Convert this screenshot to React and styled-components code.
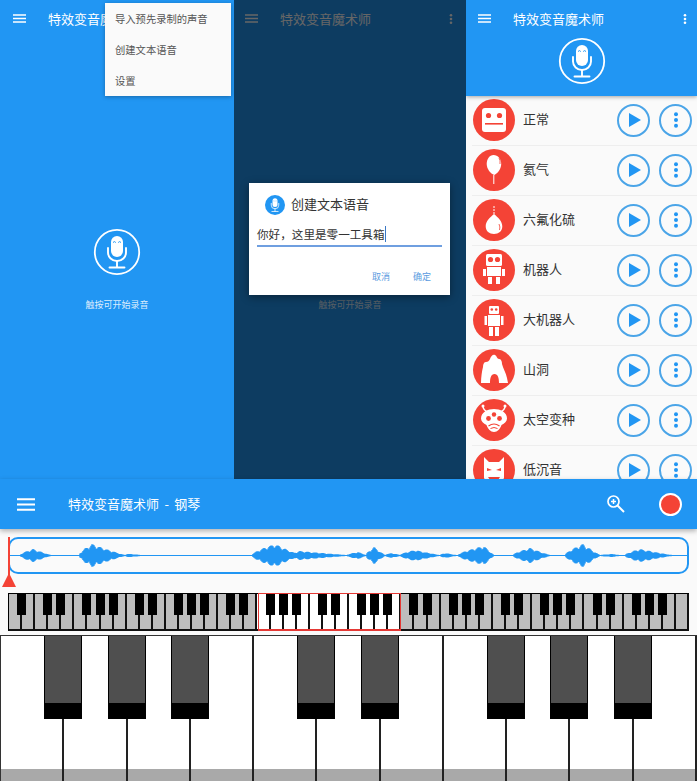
import React from 'react';
import styled, { createGlobalStyle } from 'styled-components';

const BLUE = '#2196f3';
const RED = '#f44336';

const GlobalStyle = createGlobalStyle`
	html, body {
		margin: 0;
		padding: 0;
		background: #fafafa;
	}
	* {
		box-sizing: border-box;
	}
`;

const Page = styled.div`
	width: 697px;
	height: 781px;
	overflow: hidden;
	font-family: 'Noto Sans CJK SC', 'Noto Sans', sans-serif;
	background: #fafafa;
`;

const TopRow = styled.div`
	display: grid;
	grid-template-columns: 234px 232px 231px;
	height: 479px;
	overflow: hidden;
`;

const Phone = styled.div`
	position: relative;
	display: flex;
	flex-direction: column;
	height: 479px;
	overflow: hidden;
	background: ${BLUE};
`;

const Scrim = styled.div`
	position: absolute;
	inset: 0;
	background: rgba(0, 0, 0, 0.6);
`;

const AppBar = styled.div`
	display: flex;
	align-items: center;
	flex: none;
	height: 37px;
	padding: 0 ${(p) => p.$right}px 0 ${(p) => p.$left}px;
	color: #fff;
`;

const AppTitle = styled.div`
	margin-left: 22px;
	font-size: 13px;
	line-height: 18px;
	white-space: nowrap;
	flex: 1;
`;

const Idle = styled.div`
	display: flex;
	flex-direction: column;
	align-items: center;
	padding-top: 191px;
`;

const IdleHint = styled.div`
	margin-top: 22px;
	font-size: 9px;
	line-height: 14px;
	color: rgba(255, 255, 255, 0.85);
`;

const Menu = styled.div`
	position: absolute;
	top: 3px;
	right: 3px;
	width: 126px;
	background: #fafafa;
	box-shadow: 0 1px 4px rgba(0, 0, 0, 0.3);
`;

const MenuItem = styled.div`
	height: 31px;
	padding-left: 10px;
	font-size: 10.3px;
	line-height: 31px;
	color: #555;
	white-space: nowrap;
`;

const Dialog = styled.div`
	position: absolute;
	top: 183px;
	left: 15px;
	width: 201px;
	height: 112px;
	padding: 11px 8px 0;
	background: #fff;
	box-shadow: 0 2px 8px rgba(0, 0, 0, 0.4);
`;

const DialogHead = styled.div`
	display: flex;
	align-items: center;
	gap: 6px;
	height: 22px;
	padding-left: 8px;
	font-size: 13px;
	line-height: 18px;
	color: #333;
`;

const DialogHeadText = styled.span`
	margin-bottom: 3px;
`;

const DialogBadge = styled.div`
	width: 20px;
	height: 20px;
	border-radius: 50%;
	background: ${BLUE};
`;

const DialogInput = styled.div`
	display: flex;
	align-items: center;
	height: 24px;
	margin-top: 7px;
	border-bottom: 2px solid #6f9fe0;
	font-size: 11.6px;
	color: #333;
	white-space: nowrap;
`;

const Caret = styled.span`
	width: 1px;
	height: 16px;
	background: #3b78c4;
`;

const DialogActions = styled.div`
	display: flex;
	justify-content: flex-end;
	gap: 23px;
	margin-top: 23px;
	padding-right: 11px;
	font-size: 9px;
	line-height: 14px;
	color: #5b9be0;
`;

const HeadPanel = styled.div`
	position: relative;
	z-index: 1;
	display: flex;
	flex-direction: column;
	flex: none;
	height: 96px;
	background: ${BLUE};
	box-shadow: 0 1px 4px rgba(0, 0, 0, 0.35);
`;

const HeadMic = styled.div`
	display: flex;
	justify-content: center;
`;

const VoiceList = styled.div`
	flex: none;
	background: #fafafa;
`;

const VoiceRow = styled.div`
	display: flex;
	align-items: center;
	height: 50px;
	margin-left: 6px;
	padding: 0 5px 1px 1px;
	border-bottom: 1px solid #eee;
	gap: 9px;
`;

const VoiceName = styled.div`
	flex: 1;
	margin: 0 0 2px -1px;
	font-size: 13px;
	line-height: 18px;
	color: #333;
	white-space: nowrap;
`;

const RoundButton = styled.div`
	display: flex;
	align-items: center;
	justify-content: center;
	width: 33px;
	height: 33px;
	border: 2px solid #4ba5e8;
	border-radius: 50%;
`;

const PlayGlyph = styled.svg`
	margin-left: 3px;
`;

const PianoBar = styled.div`
	position: relative;
	z-index: 1;
	display: flex;
	align-items: center;
	height: 50px;
	padding: 0 15px 0 17px;
	color: #fff;
	background: ${BLUE};
	box-shadow: 0 2px 5px rgba(0, 0, 0, 0.3);
`;

const PianoTitle = styled.div`
	flex: 1;
	margin-left: 33px;
	font-size: 13px;
	line-height: 18px;
	word-spacing: 2.5px;
`;

const RecordButton = styled.div`
	width: 23px;
	height: 23px;
	margin-left: 33px;
	border: 2px solid #fff;
	border-radius: 50%;
	background: ${RED};
`;

const WaveRow = styled.div`
	position: relative;
	height: 37px;
	margin: 8px 8px 0;
	border: 2px solid ${BLUE};
	border-radius: 10px;
`;

const Playhead = styled.div`
	position: absolute;
	top: -2px;
	left: -2px;
	width: 2px;
	height: 38px;
	background: ${RED};
	&::after {
		content: '';
		position: absolute;
		top: 36px;
		left: -6px;
		border-left: 7px solid transparent;
		border-right: 7px solid transparent;
		border-bottom: 14px solid ${RED};
	}
`;

const MiniKeys = styled.div`
	position: relative;
	display: flex;
	height: 38px;
	margin: 19px 8px 0;
	border-top: 1px solid #000;
	border-bottom: 2px solid #111;
	border-left: 1px solid #000;
`;

const MiniWhite = styled.div`
	position: relative;
	flex: 1;
	background: ${(p) => (p.$active ? '#fff' : '#bdbdbd')};
	border-right: 2px solid #111;
`;

const MiniBlack = styled.div`
	position: absolute;
	top: 0;
	right: -6px;
	z-index: 1;
	width: 9px;
	height: 21px;
	background: #000;
`;

const MiniWindow = styled.div`
	position: absolute;
	top: -1px;
	bottom: -2px;
	left: 36.57%;
	width: 21.15%;
	z-index: 2;
	border: 1px solid #e53935;
	border-bottom-width: 2px;
`;

const BigKeys = styled.div`
	display: flex;
	height: 147px;
	margin-top: 4px;
	border-top: 1px solid #333;
	border-left: 1px solid #333;
`;

const BigWhite = styled.div`
	position: relative;
	display: flex;
	flex-direction: column;
	justify-content: flex-end;
	flex: 1;
	background: #fff;
	border-right: 2px solid #222;
	border-bottom: 1px solid #444;
`;

const BigLip = styled.div`
	height: 12px;
	background: #a9a9a9;
`;

const BigBlack = styled.div`
	position: absolute;
	top: 0;
	right: -20px;
	z-index: 1;
	width: 38px;
	height: 83px;
	background: #4f4f4f;
	border: solid #000;
	border-width: 0 1.5px 16px;
`;

const Bars = () => (
	<svg width="13" height="9" viewBox="0 0 13 9">
		<path d="M0 1h13M0 4.500h13M0 8h13" stroke="currentColor" strokeWidth="1.400" fill="none" />
	</svg>
);

const BigBars = () => (
	<svg width="18" height="13" viewBox="0 0 18 13">
		<path d="M0 1.200h18M0 6.500h18M0 11.800h18" stroke="currentColor" strokeWidth="2" fill="none" />
	</svg>
);

const Dots = ({ color = 'currentColor', r = 1.300, gap = 3.800 }) => (
	<svg width="6" height="18" viewBox="0 0 6 18">
		<circle cx="3" cy={9 - gap} r={r} fill={color} />
		<circle cx="3" cy="9" r={r} fill={color} />
		<circle cx="3" cy={9 + gap} r={r} fill={color} />
	</svg>
);

const MicGlyph = ({ bg = BLUE }) => (
	<>
		<rect x="18" y="8" width="12" height="21" rx="6" fill="#fff" />
		<path d="M20 14.500q1.400-1.800 2.800 0M25.200 14.500q1.400-1.800 2.800 0" stroke={bg} strokeWidth="1" fill="none" />
		<path d="M15 20v4.500a9 8.500 0 0 0 18 0V20" stroke="#fff" strokeWidth="1.900" fill="none" strokeLinecap="round" />
		<path d="M24 33v6M16.500 39.500h15" stroke="#fff" strokeWidth="1.900" fill="none" strokeLinecap="round" />
	</>
);

const Mic = ({ size = 48 }) => (
	<svg width={size} height={size} viewBox="0 0 48 48">
		<circle cx="24" cy="24" r="22.200" stroke="#fff" strokeWidth="1.800" fill="none" />
		<MicGlyph />
	</svg>
);

const VOICE_SHAPES = {
	normal: (
		<>
			<rect x="9" y="9" width="24" height="24" rx="3" fill="#fff" />
			<circle cx="15.500" cy="16.500" r="2.600" fill={RED} />
			<circle cx="26.500" cy="16.500" r="2.600" fill={RED} />
			<rect x="12" y="24" width="18" height="1.600" fill={RED} />
		</>
	),
	helium: (
		<>
			<path d="M20.500 6c4.500 0 7.700 4 7.700 9 0 5-3.600 9.500-7 11-3.600-1.300-7.500-6-7.500-11 0-5 2.800-9 6.800-9z" fill="#fff" />
			<path d="M20.800 26v9" stroke="#fff" strokeWidth="1" />
			<path d="M26 9q1.600 2.400 1 6" stroke={RED} strokeWidth="0.800" fill="none" />
		</>
	),
	sulfur: (
		<>
			<path d="M21 15c4 3.500 8.300 7 8.300 12.300 0 5-3.700 7.700-8.300 7.700s-8.300-2.700-8.300-7.700C12.700 22 17 18.500 21 15z" fill="#fff" />
			<path d="M21 7v8" stroke="#fff" strokeWidth="1" strokeDasharray="2 1" />
			<path d="M26 25q1.500 3 .5 6" stroke={RED} strokeWidth="0.800" fill="none" />
		</>
	),
	robot: (
		<>
			<rect x="13" y="5" width="16" height="12" rx="1.500" fill="#fff" />
			<circle cx="17.500" cy="10.500" r="2.600" fill={RED} />
			<circle cx="24.500" cy="10.500" r="2.600" fill={RED} />
			<rect x="14" y="18" width="14" height="9" fill="#fff" />
			<rect x="10" y="20" width="3" height="7" fill="#fff" />
			<rect x="29" y="20" width="3" height="7" fill="#fff" />
			<rect x="15" y="28" width="4" height="7" fill="#fff" />
			<rect x="23" y="28" width="4" height="7" fill="#fff" />
		</>
	),
	bigRobot: (
		<>
			<rect x="16" y="7" width="10" height="8" rx="1" fill="#fff" />
			<circle cx="18.800" cy="10.500" r="1.300" fill={RED} />
			<circle cx="23.200" cy="10.500" r="1.300" fill={RED} />
			<rect x="15" y="16" width="12" height="11" fill="#fff" />
			<rect x="11.500" y="17" width="2.500" height="9" fill="#fff" />
			<rect x="28" y="17" width="2.500" height="9" fill="#fff" />
			<rect x="16" y="28" width="4" height="9" fill="#fff" />
			<rect x="22" y="28" width="4" height="9" fill="#fff" />
		</>
	),
	cave: (
		<path
			d="M8 34C8 28 9 22 10 18 10 15 11 13 13 13 15 13 16 12 17 10 18 7 20 5 22 6 24 7 24 10 26 10 28 10 29 12 29 15 30 19 33 24 34 29L35 34H26C26 29 25 25 21.500 25 18 25 17 29 17 34Z"
			fill="#fff"
		/>
	),
	alien: (
		<>
			<path d="M15 13C12 12 10 10 10 7M27 13C30 12 32 10 32 7" stroke="#fff" strokeWidth="1.500" fill="none" />
			<circle cx="10" cy="7" r="1.500" fill="#fff" />
			<circle cx="32" cy="7" r="1.500" fill="#fff" />
			<path d="M21 10c6 0 13 3 13 9.500 0 3-2.500 5-5.500 6.500C27 30 24.500 33 21 33s-6-3-7.500-7C10.500 24.500 8 22.500 8 19.500 8 13 15 10 21 10z" fill="#fff" />
			<circle cx="21" cy="15.500" r="2.200" fill={RED} />
			<circle cx="15.500" cy="19.500" r="2.400" fill={RED} />
			<circle cx="26.500" cy="19.500" r="2.400" fill={RED} />
			<path d="M15.500 27q5.500-4 11 0" stroke={RED} strokeWidth="1.200" fill="none" />
			<path d="M17.500 29.500q3.500-2 7 0" stroke={RED} strokeWidth="1" fill="none" />
		</>
	),
	bass: (
		<>
			<path d="M11 8l5 5h10l5-5v21q-4 7-10 7t-10-7z" fill="#fff" />
			<path d="M14 19l5 2-5 1zM28 19l-5 2 5 1z" fill={RED} />
			<path d="M15 28h12l-2 3h-8z" fill={RED} />
		</>
	),
};

const VoiceIcon = ({ shape }) => (
	<svg width="42" height="42" viewBox="0 0 42 42">
		<circle cx="21" cy="21" r="21" fill={RED} />
		{VOICE_SHAPES[shape]}
	</svg>
);

const voices = [
	{ name: '正常', shape: 'normal' },
	{ name: '氦气', shape: 'helium' },
	{ name: '六氟化硫', shape: 'sulfur' },
	{ name: '机器人', shape: 'robot' },
	{ name: '大机器人', shape: 'bigRobot' },
	{ name: '山洞', shape: 'cave' },
	{ name: '太空变种', shape: 'alien' },
	{ name: '低沉音', shape: 'bass' },
];

// x from/to/peak are in page pixels, h is half the height of the burst
const bursts = [
	[20, 51, 33, 6], [79, 125, 92, 11], [125, 142, 128, 1.200], [252, 300, 275, 11],
	[290, 347, 300, 4], [347, 366, 358, 3], [366, 385, 374, 8], [385, 400, 392, 2],
	[400, 440, 415, 5], [440, 456, 446, 2], [458, 494, 484, 9], [513, 550, 530, 7],
	[565, 600, 583, 11], [600, 620, 612, 1], [625, 672, 640, 6],
];

const wavePath = () => {
	let d = '';
	for (let px = 20; px < 672; px += 1) {
		let amp = 0;
		bursts.forEach(([from, to, peak, h]) => {
			if (px < from || px > to) return;
			const env = px < peak ? Math.pow((px - from) / (peak - from), 0.7) : Math.pow((to - px) / (to - peak), 1.100);
			amp = Math.max(amp, h * env);
		});
		if (amp > 0) {
			const noise = 0.6 + 0.4 * Math.abs(Math.sin(px * 12.9898));
			const a = amp * noise + 0.5;
			d += `M${px - 10} ${16.5 - a}V${16.5 + a}`;
		}
	}
	return d;
};

const Waveform = () => (
	<svg width="677" height="33" viewBox="0 0 677 33">
		<path d="M0 16.500H677" stroke={BLUE} strokeWidth="1" />
		<path d={wavePath()} stroke={BLUE} strokeWidth="1.500" fill="none" />
	</svg>
);

const whiteKeys = Array.from({ length: 52 }, (_, i) => i);
const hasBlack = (i) => i < 51 && [0, 1, 3, 4, 5].includes((i + 5) % 7);
const bigKeys = [true, true, true, false, true, true, false, true, true, true, false];

const IdleScreen = ({ left, right, children }) => (
	<Phone>
		<AppBar $left={left} $right={right}>
			<Bars />
			<AppTitle>特效变音魔术师</AppTitle>
			<Dots />
		</AppBar>
		<Idle>
			<Mic />
			<IdleHint>触按可开始录音</IdleHint>
		</Idle>
		{children}
	</Phone>
);

const App = () => {
	return (
		<Page>
			<GlobalStyle />
			<TopRow>
				<IdleScreen left={13} right={10}>
					<Menu>
						<MenuItem>导入预先录制的声音</MenuItem>
						<MenuItem>创建文本语音</MenuItem>
						<MenuItem>设置</MenuItem>
					</Menu>
				</IdleScreen>
				<IdleScreen left={11} right={12}>
					<Scrim />
					<Dialog>
						<DialogHead>
							<DialogBadge>
								<svg width="20" height="20" viewBox="0 0 48 48">
									<MicGlyph />
								</svg>
							</DialogBadge>
							<DialogHeadText>创建文本语音</DialogHeadText>
						</DialogHead>
						<DialogInput>
							{'你好\uFF0C这里是零一工具箱'}
							<Caret />
						</DialogInput>
						<DialogActions>
							<span>取消</span>
							<span>确定</span>
						</DialogActions>
					</Dialog>
				</IdleScreen>
				<Phone>
					<HeadPanel>
						<AppBar $left={12} $right={9}>
							<Bars />
							<AppTitle>特效变音魔术师</AppTitle>
							<Dots />
						</AppBar>
						<HeadMic>
							<Mic />
						</HeadMic>
					</HeadPanel>
					<VoiceList>
						{voices.map((voice) => (
							<VoiceRow key={voice.name}>
								<VoiceIcon shape={voice.shape} />
								<VoiceName>{voice.name}</VoiceName>
								<RoundButton>
									<PlayGlyph width="14" height="16" viewBox="0 0 14 16">
										<path d="M1 1l12 7-12 7z" fill={BLUE} />
									</PlayGlyph>
								</RoundButton>
								<RoundButton>
									<Dots color={BLUE} r={2} gap={5.800} />
								</RoundButton>
							</VoiceRow>
						))}
					</VoiceList>
				</Phone>
			</TopRow>
			<PianoBar>
				<BigBars />
				<PianoTitle>特效变音魔术师 - 钢琴</PianoTitle>
				<svg width="20" height="20" viewBox="0 0 20 20">
					<circle cx="7.500" cy="7.500" r="5.500" stroke="#fff" strokeWidth="1.700" fill="none" />
					<path d="M5 7.500h5M7.500 5v5" stroke="#fff" strokeWidth="1.500" />
					<path d="M11.500 11.500l6.500 6.500" stroke="#fff" strokeWidth="2" />
				</svg>
				<RecordButton />
			</PianoBar>
			<WaveRow>
				<Waveform />
				<Playhead />
			</WaveRow>
			<MiniKeys>
				{whiteKeys.map((i) => (
					<MiniWhite key={i} $active={i >= 19 && i < 30}>
						{hasBlack(i) && <MiniBlack />}
					</MiniWhite>
				))}
				<MiniWindow />
			</MiniKeys>
			<BigKeys>
				{bigKeys.map((black, i) => (
					<BigWhite key={i}>
						{black && <BigBlack />}
						<BigLip />
					</BigWhite>
				))}
			</BigKeys>
		</Page>
	);
};

export default App;
